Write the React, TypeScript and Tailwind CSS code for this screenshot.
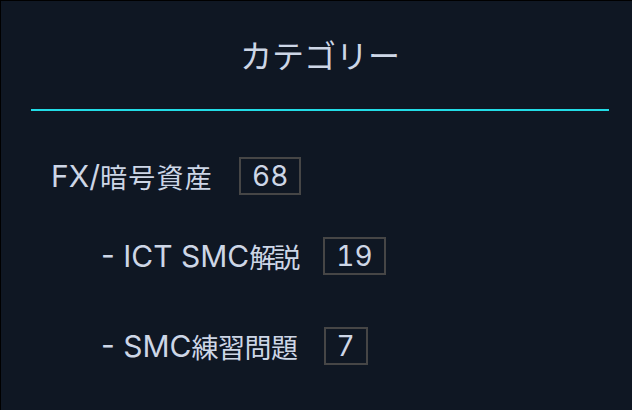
import React from "react";

const cjk = { fontFamily: '"Noto Sans CJK JP", "Noto Sans", sans-serif' };
const lat = { fontFamily: 'Inter, "Noto Sans CJK JP", sans-serif' };

function Badge({ n }: { n: string }) {
  return (
    <span
      className="inline-flex items-center justify-center border-2 border-[#464646] h-[38px] px-[11px] text-[28px] leading-none tabular-nums"
      style={lat}
    >
      {n}
    </span>
  );
}

function Label({ latin, kanji, kTrack }: { latin: string; kanji: string; kTrack: string }) {
  return (
    <span className="flex items-center leading-none whitespace-pre">
      <span className="text-[30px]" style={lat}>
        {latin}
      </span>
      <span className={`text-[27px] ${kTrack}`} style={cjk}>
        {kanji}
      </span>
    </span>
  );
}

export default function App() {
  return (
    <div
      className="w-[632px] h-[410px] bg-[#0f1723] border-t border-l border-black text-[#cdd6e6] overflow-hidden"
      style={cjk}
    >
      <div className="pl-[30px] pr-[23px]">
        <div className="h-[108px] flex items-center justify-center text-[32px] pb-[2px]">カテゴリー</div>
        <div className="h-[2px] bg-[#22dce6]" />
        <ul className="pt-[46px] pl-[20px]">
          <li className="flex items-center gap-[26px] h-[38px]">
            <Label latin="FX/" kanji="暗号資産" kTrack="tracking-[1.25px]" />
            <Badge n="68" />
          </li>
          <li className="flex items-center gap-[26px] h-[38px] mt-[42px] pl-[50px]">
            <Label latin="- ICT SMC" kanji="解説" kTrack="tracking-[-3px]" />
            <Badge n="19" />
          </li>
          <li className="flex items-center gap-[26px] h-[38px] mt-[52px] pl-[50px]">
            <Label latin="- SMC" kanji="練習問題" kTrack="tracking-[-0.5px]" />
            <Badge n="7" />
          </li>
        </ul>
      </div>
    </div>
  );
}
